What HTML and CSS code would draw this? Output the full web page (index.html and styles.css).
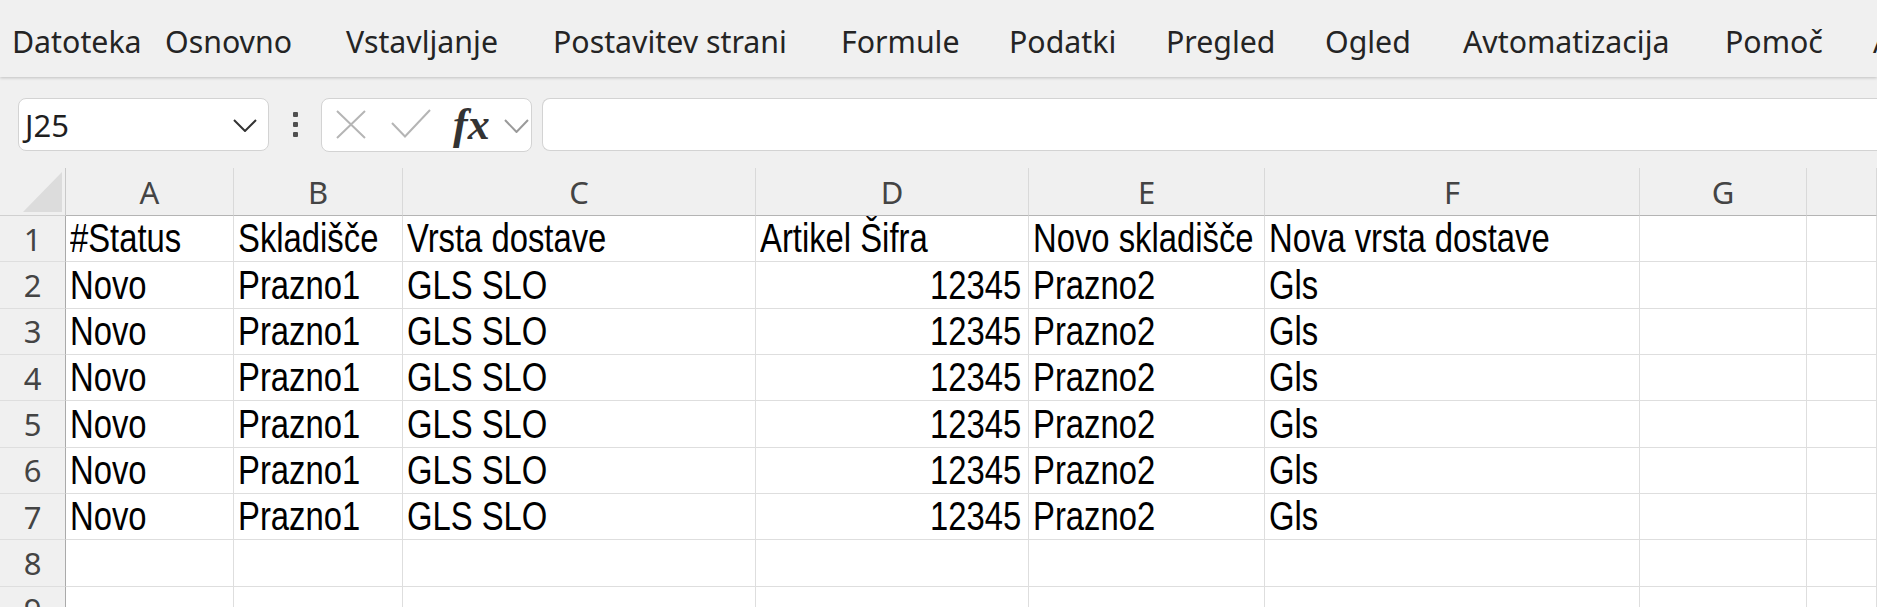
FILE: index.html
```html
<!DOCTYPE html>
<html lang="sl">
<head>
<meta charset="utf-8">
<title>Excel</title>
<link rel="stylesheet" href="styles.css">
</head>
<body>
<div class="app">
  <nav class="tabs">
    <span class="tab t-file">Datoteka</span>
    <span class="tab t-home">Osnovno</span>
    <span class="tab t-insert">Vstavljanje</span>
    <span class="tab t-layout">Postavitev strani</span>
    <span class="tab t-formulas">Formule</span>
    <span class="tab t-data">Podatki</span>
    <span class="tab t-review">Pregled</span>
    <span class="tab t-view">Ogled</span>
    <span class="tab t-auto">Avtomatizacija</span>
    <span class="tab t-help">Pomoč</span>
    <span class="tab">Acrobat</span>
  </nav>

  <div class="fbar">
    <div class="namebox">
      <span class="nb-text">J25</span>
      <svg class="nb-chev" width="24" height="13" viewBox="0 0 24 13"><path d="M1 1 L12 12 L23 1" fill="none" stroke="#333" stroke-width="2"/></svg>
    </div>
    <div class="dots"><i></i><i></i><i></i></div>
    <div class="fxbox">
      <svg class="ic-x" width="30" height="29" viewBox="0 0 30 29"><path d="M1 1 L29 28 M29 1 L1 28" fill="none" stroke="#b5b5b5" stroke-width="2"/></svg>
      <svg class="ic-check" width="40" height="30" viewBox="0 0 40 30"><path d="M1 14 L14 27.5 L39 1" fill="none" stroke="#b5b5b5" stroke-width="2"/></svg>
      <span class="fx">fx</span>
      <svg class="ic-chev" width="25" height="14" viewBox="0 0 25 14"><path d="M1 1 L12.5 13 L24 1" fill="none" stroke="#9a9a9a" stroke-width="2"/></svg>
    </div>
    <div class="finput"></div>
  </div>

  <div class="sheet">
    <div class="row head">
      <div class="corner"><svg width="65" height="47" viewBox="0 0 65 47"><polygon points="23,44 62,44 62,4" fill="#dcdcdc"/></svg></div>
      <div class="ch">A</div>
      <div class="ch">B</div>
      <div class="ch">C</div>
      <div class="ch">D</div>
      <div class="ch">E</div>
      <div class="ch">F</div>
      <div class="ch">G</div>
      <div class="ch"></div>
    </div>

    <div class="row">
      <div class="rn">1</div>
      <div class="c"><span>#Status</span></div>
      <div class="c"><span>Skladišče</span></div>
      <div class="c"><span>Vrsta dostave</span></div>
      <div class="c"><span>Artikel Šifra</span></div>
      <div class="c"><span>Novo skladišče</span></div>
      <div class="c"><span>Nova vrsta dostave</span></div>
      <div class="c"></div>
      <div class="c"></div>
    </div>
    <div class="row">
      <div class="rn">2</div>
      <div class="c"><span>Novo</span></div>
      <div class="c"><span>Prazno1</span></div>
      <div class="c"><span>GLS SLO</span></div>
      <div class="c num"><span>12345</span></div>
      <div class="c"><span>Prazno2</span></div>
      <div class="c"><span>Gls</span></div>
      <div class="c"></div>
      <div class="c"></div>
    </div>
    <div class="row">
      <div class="rn">3</div>
      <div class="c"><span>Novo</span></div>
      <div class="c"><span>Prazno1</span></div>
      <div class="c"><span>GLS SLO</span></div>
      <div class="c num"><span>12345</span></div>
      <div class="c"><span>Prazno2</span></div>
      <div class="c"><span>Gls</span></div>
      <div class="c"></div>
      <div class="c"></div>
    </div>
    <div class="row">
      <div class="rn">4</div>
      <div class="c"><span>Novo</span></div>
      <div class="c"><span>Prazno1</span></div>
      <div class="c"><span>GLS SLO</span></div>
      <div class="c num"><span>12345</span></div>
      <div class="c"><span>Prazno2</span></div>
      <div class="c"><span>Gls</span></div>
      <div class="c"></div>
      <div class="c"></div>
    </div>
    <div class="row">
      <div class="rn">5</div>
      <div class="c"><span>Novo</span></div>
      <div class="c"><span>Prazno1</span></div>
      <div class="c"><span>GLS SLO</span></div>
      <div class="c num"><span>12345</span></div>
      <div class="c"><span>Prazno2</span></div>
      <div class="c"><span>Gls</span></div>
      <div class="c"></div>
      <div class="c"></div>
    </div>
    <div class="row">
      <div class="rn">6</div>
      <div class="c"><span>Novo</span></div>
      <div class="c"><span>Prazno1</span></div>
      <div class="c"><span>GLS SLO</span></div>
      <div class="c num"><span>12345</span></div>
      <div class="c"><span>Prazno2</span></div>
      <div class="c"><span>Gls</span></div>
      <div class="c"></div>
      <div class="c"></div>
    </div>
    <div class="row">
      <div class="rn">7</div>
      <div class="c"><span>Novo</span></div>
      <div class="c"><span>Prazno1</span></div>
      <div class="c"><span>GLS SLO</span></div>
      <div class="c num"><span>12345</span></div>
      <div class="c"><span>Prazno2</span></div>
      <div class="c"><span>Gls</span></div>
      <div class="c"></div>
      <div class="c"></div>
    </div>
    <div class="row">
      <div class="rn">8</div>
      <div class="c"></div>
      <div class="c"></div>
      <div class="c"></div>
      <div class="c"></div>
      <div class="c"></div>
      <div class="c"></div>
      <div class="c"></div>
      <div class="c"></div>
    </div>
    <div class="row">
      <div class="rn">9</div>
      <div class="c"></div>
      <div class="c"></div>
      <div class="c"></div>
      <div class="c"></div>
      <div class="c"></div>
      <div class="c"></div>
      <div class="c"></div>
      <div class="c"></div>
    </div>
  </div>
</div>
</body>
</html>
```

FILE: styles.css
```css
html, body {
  margin: 0;
  padding: 0;
}
body {
  width: 1877px;
  height: 607px;
  overflow: hidden;
  background: #ffffff;
}
.app {
  width: 1877px;
  height: 607px;
  overflow: hidden;
  background: #ffffff;
}

/* Ribbon tabs */
.tabs {
  display: flex;
  height: 77px;
  box-sizing: border-box;
  padding: 22px 0 0 12px;
  background: #f0f0f0;
  font-family: "Noto Sans", "Open Sans", sans-serif;
  font-size: 30.3px;
  line-height: 40px;
  color: #242424;
  white-space: nowrap;
  overflow: hidden;
  position: relative;
  z-index: 1;
  box-shadow: 0 1px 3px rgba(0, 0, 0, 0.2);
}
.tab {
  flex: none;
}
.t-file { width: 153px; }
.t-home { width: 181px; }
.t-insert { width: 207px; }
.t-layout { width: 288px; }
.t-formulas { width: 168px; }
.t-data { width: 157px; }
.t-review { width: 159px; }
.t-view { width: 138px; }
.t-auto { width: 262px; }
.t-help { width: 148px; }

/* Formula bar */
.fbar {
  display: flex;
  align-items: center;
  height: 91px;
  box-sizing: border-box;
  padding: 21px 0 17px 18px;
  background: #f0f0f0;
}
.namebox {
  flex: none;
  width: 251px;
  height: 53px;
  box-sizing: border-box;
  border: 1px solid #d3d3d3;
  border-radius: 8px;
  background: #ffffff;
  display: flex;
  align-items: center;
  justify-content: space-between;
  padding: 0 11px 0 6px;
}
.nb-text {
  font-family: "Noto Sans", "Open Sans", sans-serif;
  font-size: 31px;
  line-height: 40px;
  color: #1f1f1f;
}
.nb-chev {
  display: block;
  margin-top: 2px;
}
.dots {
  flex: none;
  display: flex;
  flex-direction: column;
  gap: 5px;
  margin: 0 23px 0 24px;
}
.dots i {
  display: block;
  width: 5px;
  height: 5px;
  border-radius: 1px;
  background: #505050;
}
.fxbox {
  flex: none;
  width: 211px;
  height: 54px;
  box-sizing: border-box;
  border: 1px solid #d3d3d3;
  border-radius: 8px;
  background: #ffffff;
  display: flex;
  align-items: center;
  padding-left: 14px;
}
.fxbox svg {
  display: block;
  flex: none;
}
.ic-check {
  margin-left: 25px;
  margin-top: -2px;
}
.fx {
  margin-left: 22px;
  font-family: "Liberation Serif", "DejaVu Serif", serif;
  font-style: italic;
  font-weight: 700;
  font-size: 44px;
  line-height: 44px;
  color: #333333;
}
.ic-chev {
  margin-left: 14px;
  margin-top: 2px;
}
.finput {
  flex: 1;
  height: 53px;
  margin-left: 10px;
  box-sizing: border-box;
  border: 1px solid #d3d3d3;
  border-right: none;
  border-radius: 8px 0 0 8px;
  background: #ffffff;
}

/* Sheet grid */
.sheet {
  display: flex;
  flex-direction: column;
}
.row {
  display: grid;
  grid-template-columns: 66px 168px 169px 353px 273px 236px 375px 167px 1fr;
  height: 46.35px;
  flex: none;
}
.row.head {
  height: 48px;
  background: #f0f0f0;
}
.corner {
  box-sizing: border-box;
  border-right: 1px solid #c9c9c9;
  border-bottom: 1px solid #d0d0d0;
  background: #f0f0f0;
}
.corner svg {
  display: block;
}
.ch {
  box-sizing: border-box;
  border-right: 1px solid #d9d9d9;
  border-bottom: 1px solid #b4b4b4;
  display: flex;
  align-items: center;
  justify-content: center;
  font-family: "Noto Sans", "Open Sans", sans-serif;
  font-size: 31px;
  line-height: 40px;
  color: #444444;
}
.rn {
  box-sizing: border-box;
  background: #f0f0f0;
  border-right: 1px solid #aaaaaa;
  border-bottom: 1px solid #dedede;
  display: flex;
  align-items: center;
  justify-content: center;
  font-family: "Noto Sans", "Open Sans", sans-serif;
  font-size: 31px;
  line-height: 40px;
  color: #444444;
}
.c {
  box-sizing: border-box;
  border-right: 1px solid #dedede;
  border-bottom: 1px solid #dedede;
  display: flex;
  align-items: flex-end;
  padding: 0 4px 3px 4px;
  font-family: "Liberation Sans", Arial, sans-serif;
  font-size: 40px;
  line-height: 40px;
  color: #000000;
  white-space: nowrap;
}
.c span {
  display: inline-block;
  transform: scaleX(0.82);
  transform-origin: left bottom;
}
.c.num {
  justify-content: flex-end;
  padding-right: 7px;
}
.c.num span {
  transform-origin: right bottom;
}
```
